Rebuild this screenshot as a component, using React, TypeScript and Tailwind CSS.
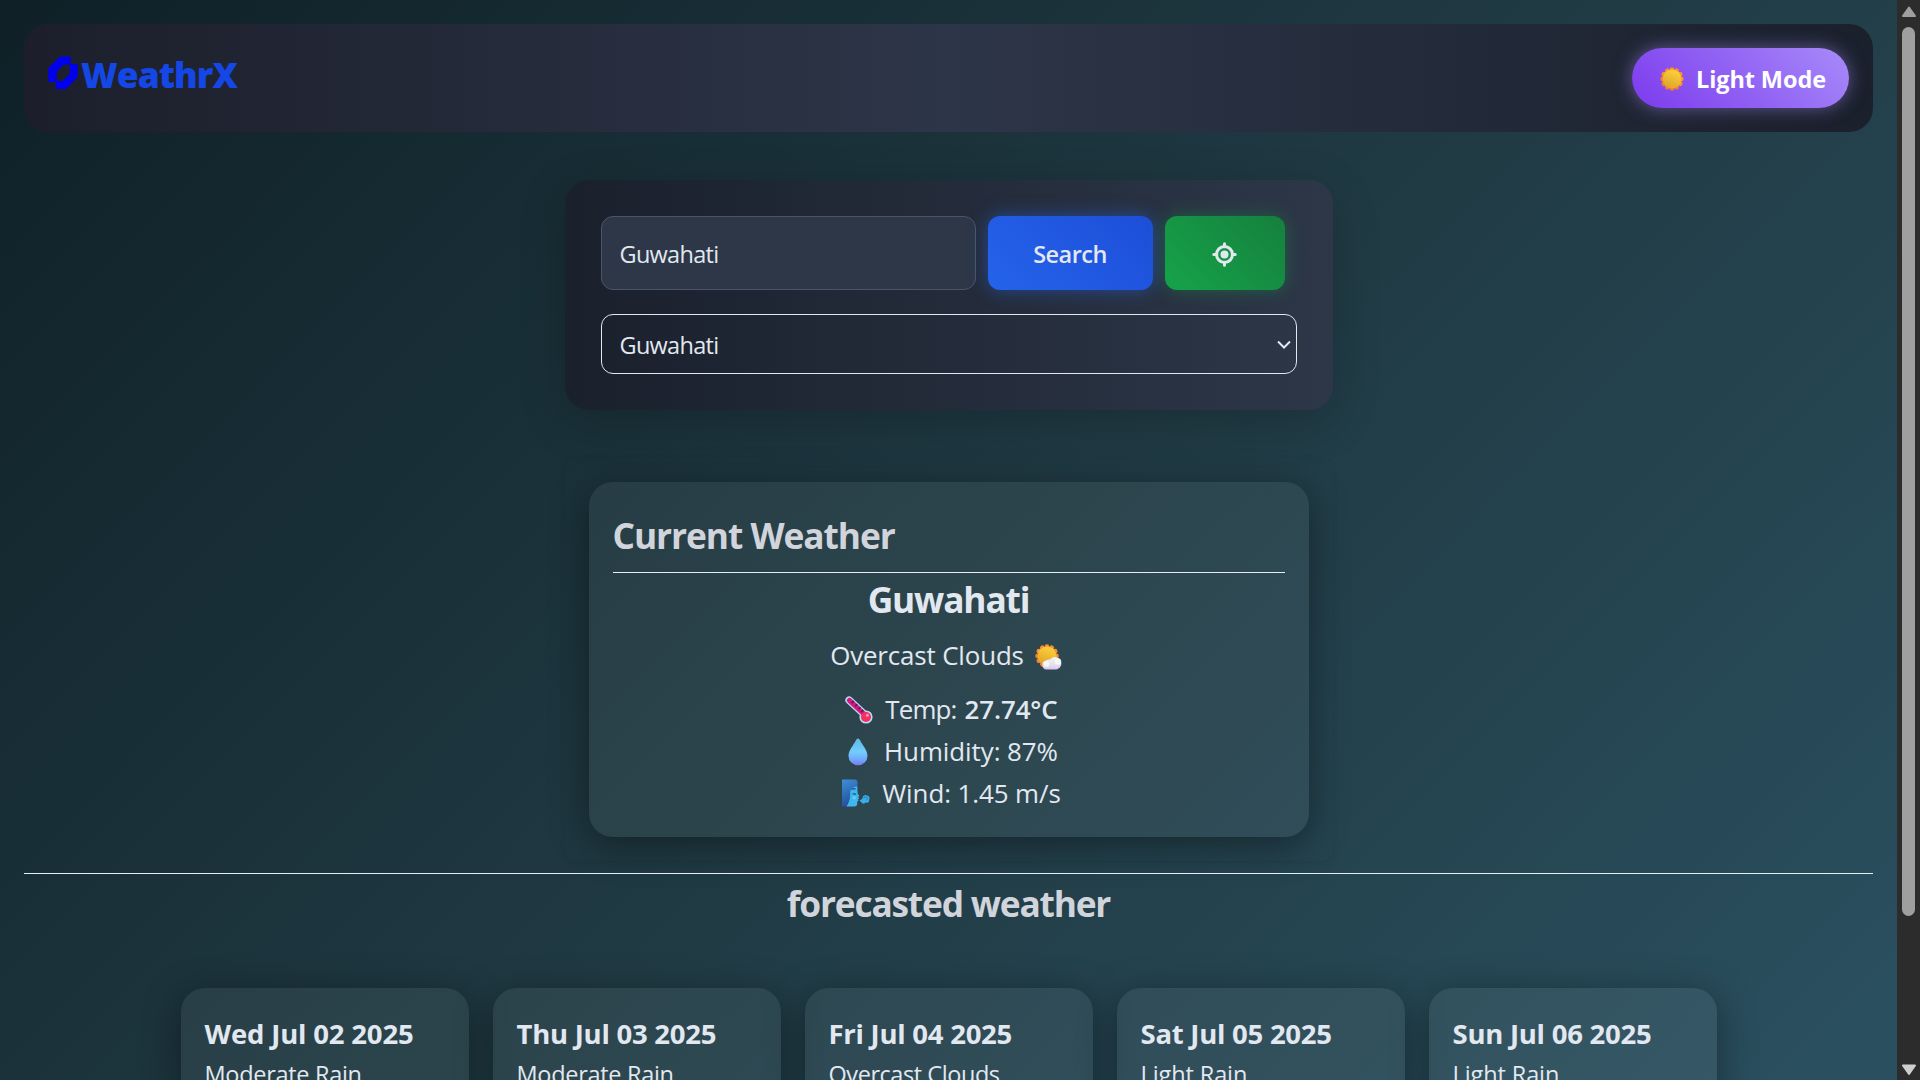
import React from "react";

const forecast = [
  { date: "Wed Jul 02 2025", text: "Moderate Rain", track: "tracking-[-0.3px]", dateTrack: "tracking-[-0.17px]" },
  { date: "Thu Jul 03 2025", text: "Moderate Rain", track: "tracking-[-0.3px]", dateTrack: "tracking-[-0.25px]" },
  { date: "Fri Jul 04 2025", text: "Overcast Clouds", track: "tracking-[-0.44px]", dateTrack: "tracking-[-0.25px]" },
  { date: "Sat Jul 05 2025", text: "Light Rain", track: "tracking-[-0.1px]", dateTrack: "tracking-[-0.25px]" },
  { date: "Sun Jul 06 2025", text: "Light Rain", track: "tracking-[-0.1px]", dateTrack: "tracking-[-0.25px]" },
];

const petals = [0, 30, 60, 90, 120, 150, 180, 210, 240, 270, 300, 330];

function SunDisc({ id }: { id: string }) {
  return (
    <>
      <defs>
        <linearGradient id={id} x1="0.7" y1="0" x2="0.3" y2="1">
          <stop offset="0" stopColor="#ffd23a" />
          <stop offset="1" stopColor="#dda22d" />
        </linearGradient>
      </defs>
      {petals.map((a) => (
        <circle key={a} cx="12" cy="2.6" r="2.4" fill={a > 120 && a < 300 ? "#f07c2c" : "#fb8f2b"} transform={`rotate(${a} 12 12)`} />
      ))}
      <circle cx="12" cy="12" r="9.5" fill={`url(#${id})`} />
    </>
  );
}

function Sun() {
  return (
    <svg className="mt-[2px] h-6 w-6" viewBox="0 0 24 24">
      <SunDisc id="sun-light" />
    </svg>
  );
}

function SunCloud() {
  return (
    <svg className="mt-[3px] h-[26px] w-7" viewBox="0 0 28 26">
      <defs>
        <linearGradient id="cloud" x1="0" y1="0" x2="0" y2="1">
          <stop offset="0" stopColor="#f4f3f6" />
          <stop offset="0.6" stopColor="#e4e2e9" />
          <stop offset="1" stopColor="#d6c8f2" />
        </linearGradient>
      </defs>
      <SunDisc id="sun-cloud" />
      <path d="M11.6 25.5a4.6 4.6 0 0 1-.6-9.1 4.8 4.8 0 0 1 4-.8 6.3 6.3 0 1 1 6.6 9.9z" fill="url(#cloud)" />
      <circle cx="11.5" cy="20" r="3" fill="#fbfafc" opacity="0.8" />
      <circle cx="23" cy="17.5" r="3.2" fill="#fbfafc" opacity="0.8" />
    </svg>
  );
}

function Thermometer() {
  return (
    <svg className="mt-[2px] h-7 w-7" viewBox="0 0 28 28">
      <path d="M4.2 4.2 19 18" stroke="#b5d9fb" strokeWidth="7.6" strokeLinecap="round" />
      <circle cx="21" cy="21" r="6.6" fill="#b5d9fb" />
      <path d="M4.4 4.4 19 18" stroke="#d9147a" strokeWidth="5" strokeLinecap="round" />
      <circle cx="21" cy="21" r="5" fill="#f5305c" />
      <circle cx="22.4" cy="19.3" r="1.5" fill="#ff9aa8" />
      <path d="m8.8 5-2 2M12.2 8.2l-2 2M15.4 11.2l-2 2M18.2 14l-2 2" stroke="#3b2452" strokeWidth="1.6" />
    </svg>
  );
}

function Droplet() {
  return (
    <svg className="mt-[2px] h-7 w-5" viewBox="0 0 20 28">
      <defs>
        <linearGradient id="drop" x1="0.5" y1="0" x2="0.5" y2="1">
          <stop offset="0" stopColor="#5bb8e6" />
          <stop offset="0.5" stopColor="#74cdfb" />
          <stop offset="0.78" stopColor="#6fa9fb" />
          <stop offset="1" stopColor="#7b78f5" />
        </linearGradient>
      </defs>
      <path d="M10 .5c1 0 1.6.8 2.2 2C14.8 7.6 19.5 12.5 19.5 18a9.5 9.3 0 0 1-19 0C.5 12.5 5.2 7.6 7.8 2.5 8.4 1.3 9 .5 10 .5z" fill="url(#drop)" />
    </svg>
  );
}

function WindFace() {
  return (
    <svg className="h-7 w-7" viewBox="0 0 28 28">
      <defs>
        <linearGradient id="hair" x1="0" y1="0" x2="0.3" y2="1">
          <stop offset="0" stopColor="#3f8fd8" />
          <stop offset="1" stopColor="#234f9c" />
        </linearGradient>
      </defs>
      <path d="M0 .5h12.5Q15.5.5 15.5 3.5v5L9 27.5H0z" fill="url(#hair)" />
      <path d="M15.2 7.5c-4 0-7 2-7 7 0 6-1 8.5-3.7 13h7.7c2 0 3-1 3-3v-1.7l1.300-1-.5-1.300 1.200-1-1-1.300 1.100-1.200-1.600-2.500z" fill="#3fb7ee" />
      <path d="M9.600 10.600q2-1.700 4-.4M10.600 14.600q1.800 1.200 3.600.1" stroke="#1c4f94" strokeWidth="1.2" fill="none" />
      <circle cx="12.2" cy="18.8" r="1.7" fill="#66cdf8" />
      <path d="M17.500 21.300q2.500-.3 3.200-2.500a2.700 2.700 0 0 1 3.800-2.600 3.100 3.100 0 0 1 2.600 4.700 2.400 2.400 0 0 1-3.300 2.700q-2 2-4.100.2-1.200-1.400-2.200-2.500z" fill="#37aee8" />
      <path d="M22 19.500a1.700 1.700 0 1 1 2.300 1.500" stroke="#1d7fc4" strokeWidth="1" fill="none" />
    </svg>
  );
}

function LocateIcon() {
  return (
    <svg className="h-[25px] w-[25px]" viewBox="0 0 25 25" fill="none" stroke="#e2e8f0" strokeWidth="3">
      <circle cx="12.5" cy="12.500" r="8" />
      <circle cx="12.5" cy="12.500" r="4" fill="#e2e8f0" stroke="none" />
      <path d="M12.500 1.800v3M12.500 20.200v3M1.800 12.500h3M20.200 12.500h3" strokeLinecap="round" />
    </svg>
  );
}

function Scrollbar() {
  return (
    <div className="flex h-full w-[23px] shrink-0 flex-col items-center bg-[#2c2c2c] pb-1 pt-[6px]">
      <svg className="h-3 w-4 shrink-0" viewBox="0 0 16 12">
        <path d="M8 1.500 14 10H2z" fill="#9f9f9f" stroke="#9f9f9f" strokeWidth="2" strokeLinejoin="round" />
      </svg>
      <div className="mt-[9px] h-[889px] w-[13px] rounded-full bg-[#9f9f9f]" />
      <svg className="mt-auto h-[13px] w-4 shrink-0" viewBox="0 0 16 13">
        <path d="M8 11 14 2.500H2z" fill="#cfcfcf" stroke="#cfcfcf" strokeWidth="2" strokeLinejoin="round" />
      </svg>
    </div>
  );
}

function Header() {
  return (
    <header className="flex h-[108px] shrink-0 items-start justify-between rounded-3xl bg-[linear-gradient(90deg,#1c1f2b,#2d3548_50%,#1a202c)] p-6">
      <div className="flex h-[50px] items-center">
        <svg className="h-[34px] w-[33px]" viewBox="48 55 33 34">
          <path
            fillRule="evenodd"
            fill="#0000ee"
            d="M48.300 67.300 60 55.600H70.700V62.700L77.700 63.300V76L66 88H55.700V81H48.300zM56.700 70.700V80H62.700L69.700 72.700V63.700H63.300z"
          />
        </svg>
        <span className="pt-[2px] text-[35.3px] font-black tracking-[-0.9px] text-[#1447e6]">WeathrX</span>
      </div>
      <button className="flex h-[60px] w-[217px] items-center rounded-full bg-[linear-gradient(45deg,#7c3aed,#a78bfa)] pl-7 shadow-[0_0_18px_rgba(167,139,250,0.5)]">
        <Sun />
        <span className="ml-3 whitespace-nowrap pt-[2px] text-[23.5px] font-bold leading-[60px] tracking-[-0.1px] text-white">Light Mode</span>
      </button>
    </header>
  );
}

function SearchPanel() {
  return (
    <section className="mt-12 flex h-[230px] w-[768px] shrink-0 flex-col gap-6 rounded-3xl bg-[linear-gradient(90deg,#1a202c,#2d3748)] p-9 shadow-[0_12px_48px_rgba(0,0,0,0.2)]">
      <div className="flex h-[74px] gap-3">
        <div className="flex w-[375px] items-center rounded-xl border border-[#4a5568] bg-[#2d3748] pl-[18px] text-[23.5px] tracking-[-0.7px]">
          <span className="pt-1">Guwahati</span>
        </div>
        <button className="w-[165px] rounded-xl bg-[linear-gradient(45deg,#2563eb,#1d4ed8)] pt-1 text-[23.5px] font-semibold tracking-[-0.52px] shadow-[0_0_18px_rgba(37,99,235,0.5)]">
          Search
        </button>
        <button className="flex w-[120px] items-center justify-center rounded-xl bg-[linear-gradient(45deg,#16a34a,#15803d)] pt-[2px] shadow-[0_0_18px_rgba(22,163,74,0.4)]">
          <LocateIcon />
        </button>
      </div>
      <div className="flex h-[60px] items-center justify-between rounded-xl border border-[#e2e8f0] pl-[18px] pr-[5px] text-[23.5px] tracking-[-0.7px]">
        <span className="pt-1">Guwahati</span>
        <svg className="h-[9px] w-[14px]" viewBox="0 0 14 9" fill="none" stroke="#e2e8f0" strokeWidth="2">
          <path d="m1 1.500 6 6 6-6" />
        </svg>
      </div>
    </section>
  );
}

function CurrentWeather() {
  return (
    <section className="mt-12 shrink-0 rounded-xl p-6 shadow-[0_2px_6px_rgba(0,0,0,0.06)]">
      <div className="flex h-[355px] w-[720px] flex-col items-center rounded-3xl bg-[linear-gradient(#ffffff0e,#ffffff0e)] px-6 pt-6 text-[25.9px] leading-[42px] shadow-[0_8px_38px_rgba(0,0,0,0.4)]">
        <h2 className="h-[66px] w-full pt-px text-[35.3px] font-bold leading-[56px] tracking-[-1.05px] text-[#d1d5db]">
          Current Weather
        </h2>
        <div className="h-px w-full shrink-0 bg-[#e2f0f6]" />
        <h3 className="pt-px text-[35.3px] font-bold leading-[50px] tracking-[-1.15px]">Guwahati</h3>
        <p className="mt-[10px] flex items-center gap-[11px] pr-1 tracking-[-0.14px]">
          Overcast Clouds <SunCloud />
        </p>
        <p className="mt-3 flex items-center pl-[6px]">
          <Thermometer />
          <span className="ml-[12px] tracking-[-0.85px]">Temp:</span>
          <span className="ml-[8px] font-semibold tracking-[-0.1px]">27.74°C</span>
        </p>
        <p className="flex items-center pl-[9px]">
          <Droplet />
          <span className="ml-[16px] tracking-[-0.05px]">Humidity: 87%</span>
        </p>
        <p className="flex items-center pl-[6px]">
          <WindFace />
          <span className="ml-3 tracking-[-0.07px]">Wind: 1.45 m/s</span>
        </p>
      </div>
    </section>
  );
}

export default function App() {
  return (
    <div className="flex h-[1080px] w-[1920px] overflow-hidden bg-[#0f2027] font-['Open_Sans','Noto_Sans',sans-serif] text-[#e2e8f0]">
      <main className="flex min-w-0 flex-1 flex-col items-center bg-[linear-gradient(135deg,#0f2027,#203a43_50%,#2c5364)] bg-[length:100%_1255px] bg-no-repeat pt-6">
        <div className="flex w-[1849px] flex-col items-center">
          <div className="w-full">
            <Header />
          </div>
          <SearchPanel />
          <CurrentWeather />
          <div className="mt-3 h-px w-full bg-[#e2f0f6]" />
          <h2 className="h-[56px] pt-px text-center text-[35.3px] font-bold leading-[56px] tracking-[-1.2px] text-[#d1d5db]">
            forecasted weather
          </h2>
          <div className="mt-[58px] flex gap-6">
            {forecast.map((d) => (
              <article key={d.date} className="h-[260px] w-[288px] shrink-0 rounded-3xl bg-[linear-gradient(#ffffff0e,#ffffff0e)] px-6 pt-[25px] shadow-[0_8px_38px_rgba(0,0,0,0.4)]">
                <h3 className={`whitespace-nowrap text-[27.5px] font-bold leading-[42px] ${d.dateTrack}`}>{d.date}</h3>
                <p className={`text-[23.5px] leading-[38px] ${d.track}`}>{d.text}</p>
              </article>
            ))}
          </div>
        </div>
      </main>
      <Scrollbar />
    </div>
  );
}
